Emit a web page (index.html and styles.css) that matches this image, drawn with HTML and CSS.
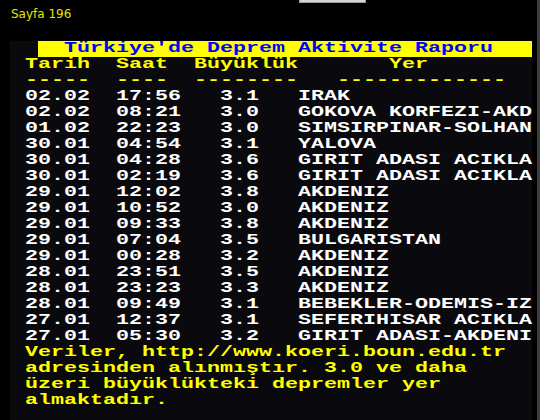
FILE: index.html
```html
<!DOCTYPE html>
<html lang="tr">
<head>
<meta charset="utf-8">
<title>Sayfa 196</title>
<link rel="stylesheet" href="styles.css">
</head>
<body>
<div class="screen">
  <div class="main">
    <div class="pageno">Sayfa 196</div>
    <div class="tab"></div>
    <div class="panel">
      <div class="title"><span class="tt">Türkiye'de Deprem Aktivite Raporu</span></div>
      <div class="line head cols-h"><span>Tarih</span><span>Saat</span><span>Büyüklük</span><span>Yer</span></div>
      <div class="line head cols-d"><span>-----</span><span>----</span><span>--------</span><span>-------------</span></div>
      <div class="line row"><span>02.02</span><span>17:56</span><span>3.1</span><span>IRAK</span></div>
      <div class="line row"><span>02.02</span><span>08:21</span><span>3.0</span><span>GOKOVA KORFEZI-AKD</span></div>
      <div class="line row"><span>01.02</span><span>22:23</span><span>3.0</span><span>SIMSIRPINAR-SOLHAN</span></div>
      <div class="line row"><span>30.01</span><span>04:54</span><span>3.1</span><span>YALOVA</span></div>
      <div class="line row"><span>30.01</span><span>04:28</span><span>3.6</span><span>GIRIT ADASI ACIKLA</span></div>
      <div class="line row"><span>30.01</span><span>02:19</span><span>3.6</span><span>GIRIT ADASI ACIKLA</span></div>
      <div class="line row"><span>29.01</span><span>12:02</span><span>3.8</span><span>AKDENIZ</span></div>
      <div class="line row"><span>29.01</span><span>10:52</span><span>3.0</span><span>AKDENIZ</span></div>
      <div class="line row"><span>29.01</span><span>09:33</span><span>3.8</span><span>AKDENIZ</span></div>
      <div class="line row"><span>29.01</span><span>07:04</span><span>3.5</span><span>BULGARISTAN</span></div>
      <div class="line row"><span>29.01</span><span>00:28</span><span>3.2</span><span>AKDENIZ</span></div>
      <div class="line row"><span>28.01</span><span>23:51</span><span>3.5</span><span>AKDENIZ</span></div>
      <div class="line row"><span>28.01</span><span>23:23</span><span>3.3</span><span>AKDENIZ</span></div>
      <div class="line row"><span>28.01</span><span>09:49</span><span>3.1</span><span>BEBEKLER-ODEMIS-IZ</span></div>
      <div class="line row"><span>27.01</span><span>12:37</span><span>3.1</span><span>SEFERIHISAR ACIKLA</span></div>
      <div class="line row"><span>27.01</span><span>05:30</span><span>3.2</span><span>GIRIT ADASI-AKDENI</span></div>
      <div class="line note">Veriler, http://www.koeri.boun.edu.tr</div>
      <div class="line note">adresinden alınmıştır. 3.0 ve daha</div>
      <div class="line note">üzeri büyüklükteki depremler yer</div>
      <div class="line note">almaktadır.</div>
    </div>
  </div>
  <div class="edge"></div>
</div>
</body>
</html>
```
FILE: styles.css
```css
html, body {
  margin: 0;
  padding: 0;
  background: #000;
}
.screen {
  width: 540px;
  height: 420px;
  overflow: hidden;
  display: flex;
  background: #000;
}
.main {
  position: relative;
  width: 537px;
  display: flex;
  flex-direction: column;
}
.edge {
  width: 3px;
  background: #3c3c3c;
}
.pageno {
  font-family: "DejaVu Sans", Verdana, sans-serif;
  font-size: 12px;
  line-height: 14px;
  color: #e6e600;
  padding: 7px 0 0 11px;
  height: 20px;
}
.tab {
  position: absolute;
  left: 299px;
  top: 0;
  width: 65px;
  height: 2px;
  background: #d4d4d4;
  border: 1px solid #9a9a9a;
  border-top: none;
}
.panel {
  margin: 14px 0 0 10px;
  width: 522px;
  flex: 1;
  background: #0a090d;
  padding-left: 15px;
  box-sizing: border-box;
  font-family: "Liberation Mono", "DejaVu Sans Mono", monospace;
  font-weight: bold;
  font-size: 15px;
}
.title {
  margin-left: 13px;
  height: 16px;
  background: #ffff00;
  padding-left: 26px;
}
.tt, .line {
  display: block;
  line-height: 16px;
  height: 16px;
  white-space: pre;
  transform: scaleX(1.4444);
  transform-origin: 0 0;
}
.tt { color: #0000ff; }
.head { color: #ffff00; }
.row { color: #ffffff; }
.note { color: #ffff00; }
.cols-h, .cols-d, .row {
  display: grid;
}
.cols-h { grid-template-columns: 7ch 6ch 15ch auto; }
.cols-d { grid-template-columns: 7ch 6ch 11ch auto; }
.row { grid-template-columns: 7ch 8ch 6ch auto; }
```
